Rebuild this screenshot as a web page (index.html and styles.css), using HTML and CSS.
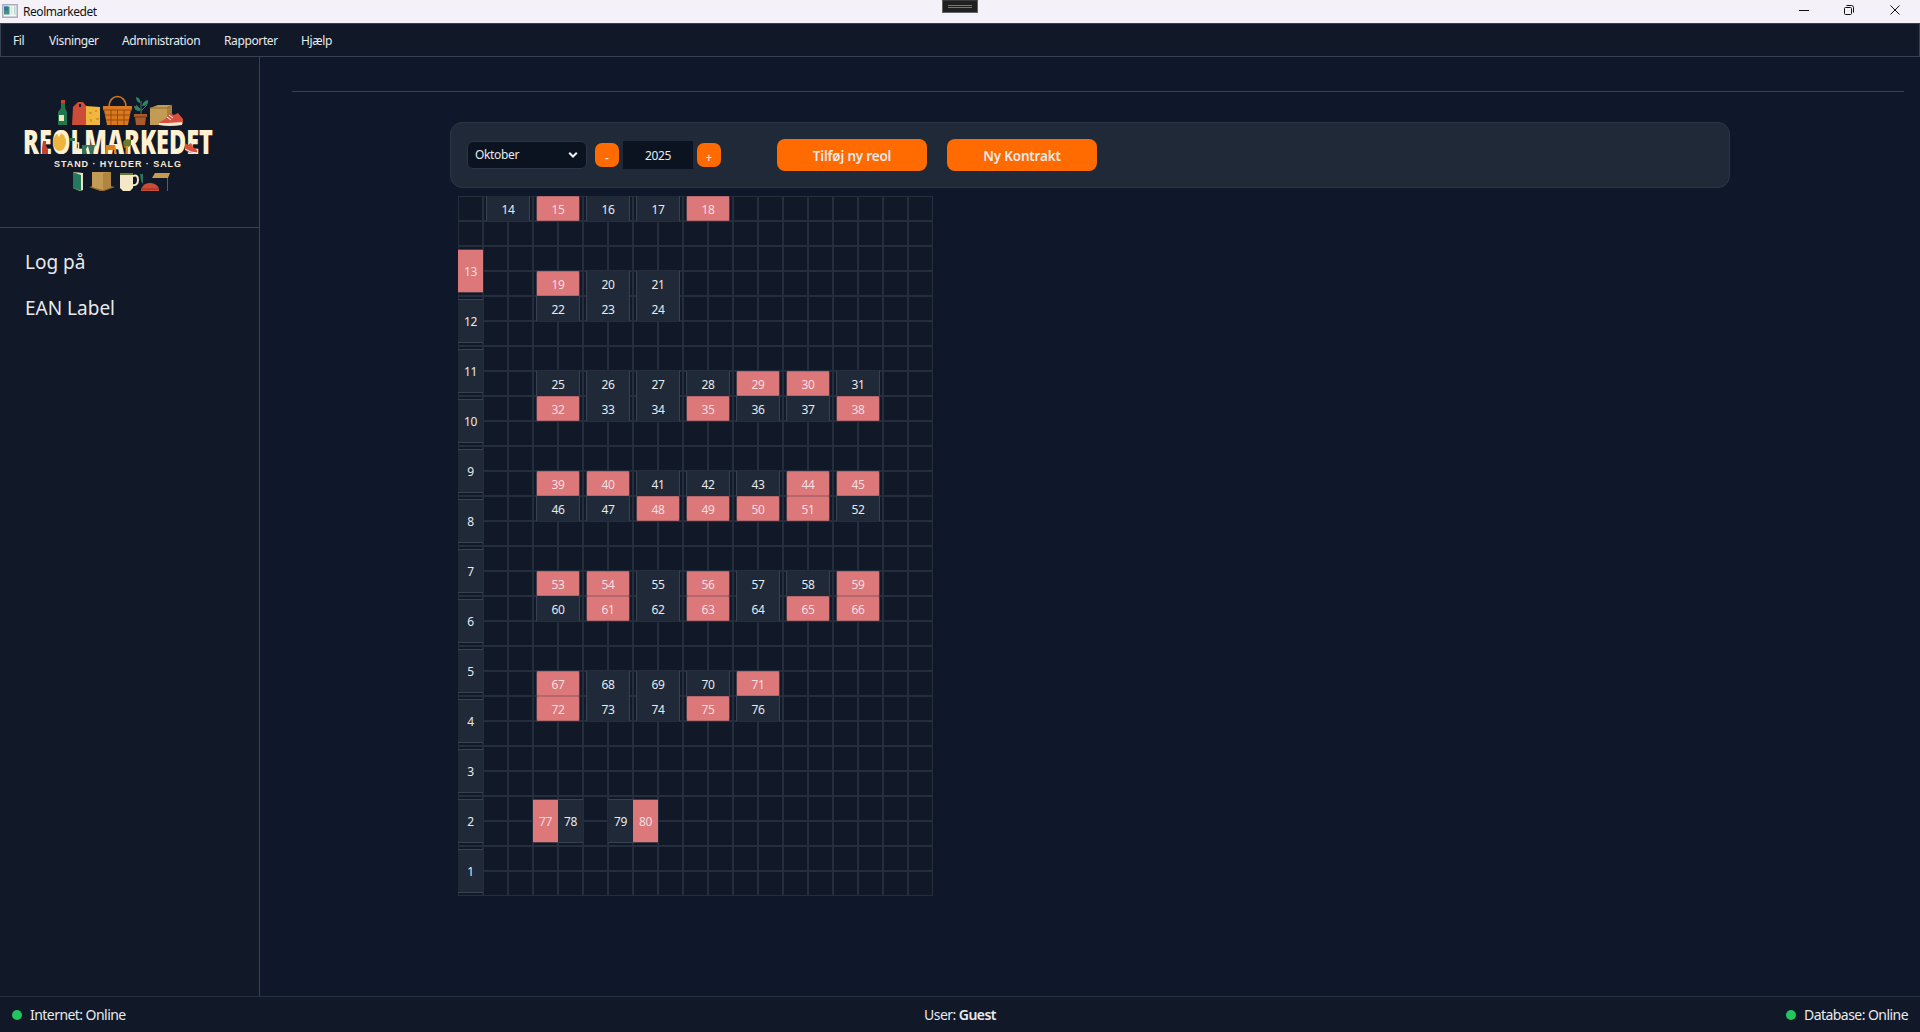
FILE: index.html
```html
<!DOCTYPE html>
<html lang="da">
<head>
<meta charset="utf-8">
<title>Reolmarkedet</title>
<link rel="stylesheet" href="styles.css">
</head>
<body>
<header class="titlebar">
  <svg class="app-icon" width="16" height="14" viewBox="0 0 16 14"><rect x=".75" y=".75" width="14.5" height="12.5" fill="#f4f6f8" stroke="#a9afb8" stroke-width="1.5"/><rect x="2" y="2.5" width="5.5" height="8" fill="#3f9580"/><rect x="2" y="2.500" width="4" height="4" fill="#3d70a8"/><rect x="8.500" y="2.500" width="2" height="8" fill="#dde5e9"/><rect x="12" y="2.500" width="1.500" height="8" fill="#b5d8c5"/></svg>
  <span class="app-title">Reolmarkedet</span>
  <span class="grip"><i></i><i></i></span>
  <svg class="win-buttons" width="120" height="23" viewBox="0 0 120 23" fill="none" stroke="#111"><path d="M9 10.500h10"/><rect x="54.500" y="7.500" width="7" height="7" rx="1"/><path d="M56.500 5.500h5q2 0 2 2v5"/><path d="M100.500 5.500l9 9m0-9l-9 9"/></svg>
</header>
<nav class="menubar"><span class="m1">Fil</span><span class="m2">Visninger</span><span class="m3">Administration</span><span class="m4">Rapporter</span><span class="m5">Hjælp</span></nav>
<div class="body">
  <aside class="sidebar">
    <div class="logo">
      <svg width="220" height="120" viewBox="0 0 220 120">
        <path d="M51 15h4v8l2 4v13h-9V27l3-4z" fill="#21764a"/><path d="M51 15h4v3h-4z" fill="#c9432f"/><path d="M49 30h5v6h-5z" fill="#f3e6c2"/>
        <path d="M63 22l5-5h5l4 5v18H62z" fill="#cc4c37"/><path d="M69 19h2v3h-2z" fill="#111827"/>
        <path d="M76 21l14 1v18H76z" fill="#efb73f"/><path d="M79 27h3v2h-3zM85 25h2v2h-2zM80 34h2v3h-2zM86 33h3v2h-3z" fill="#dc9528"/>
        <path d="M99 22c0-14 17-14 17 0" fill="none" stroke="#cf761f" stroke-width="1.500"/><path d="M93 21h29v4h-1l-3 15H97l-3-15h-1z" fill="#d97a20"/><path d="M93 25h29M95 30h25M96 35h23M101 25v15M107.500 25v15M114 25v15" stroke="#99490f" fill="none"/>
        <path d="M131 29V16m0 10l6-6m-6 5l-5-5" stroke="#2f8561" fill="none"/><path d="M126 12q5 1 4 6-4-1-4-6zM138 15q1 6-6 6 1-5 6-6zM124 21q6 0 6 5-6 0-6-5z" fill="#2f8561"/>
        <path d="M124 29h13v3h-1l-1 8h-9l-1-8h-1z" fill="#a75a2b"/><path d="M125 32h11" stroke="#713515"/>
        <path d="M140 23l8-3h14v17l-4 3h-18z" fill="#c29b55"/><path d="M157 22l5-2v17l-5 3z" fill="#a87e3e"/><path d="M140 23h17l5-3" fill="none" stroke="#8e6a33"/>
        <path d="M149 37q6-1 11-9l4 2 4-2 5 6v5l-10 1h-11z" fill="#d6503d"/><path d="M149 38h9l14-1v3q-13 2-23 0z" fill="#f7e6cb"/><path d="M157 32l4 3m-2-5l4 3" stroke="#fff" fill="none"/>
        <text class="logo-name" x="13" y="69" textLength="190" lengthAdjust="spacingAndGlyphs">REOLMARKEDET</text>
        <path d="M33 56h3v5l2 3v5h-6v-6z" fill="#c9412e"/><ellipse cx="49.500" cy="57" rx="6.500" ry="9" fill="#efb43c"/><path d="M46 47l3 5 3-5" fill="#fff1d2"/><path d="M59 53h6v3h-6z" fill="#2f7354"/><path d="M64 58h4.500v6h-4" stroke="#efe4c4" stroke-width="1.500" fill="none"/><path d="M72 60h13l-2 9H72z" fill="#347356"/><path d="M76 64l2-3 2 8h-3z" fill="#fff1d2"/><path d="M96 60h9l2 9h-3v-4h-6v4h-3z" fill="#dd801f"/><path d="M113 57q2-4 8-2v5l-4 3h-3z" fill="#687c2b"/><path d="M117 61v8" stroke="#e18a23" stroke-width="2"/><path d="M175 58l3 2 3-2 2 4 4 3v3q-7 1-12-3z" fill="#d6503d"/><path d="M175 64q6 4 12 4" stroke="#fff" fill="none"/>
        <text class="logo-sub" x="44" y="81.500" textLength="127">STAND · HYLDER · SALG</text>
        <g transform="translate(-10 0)">
        <path d="M73 87l10 1v17l-3 1-7-3z" fill="#ede2bd"/><path d="M73 87l8 3v16l-8-3z" fill="#24795c"/>
        <path d="M89 102l13-3 13 3-11 4h-4z" fill="#986d31"/><path d="M92 87h19v15l-8 3-11-3z" fill="#c39b55"/><path d="M103 88l8-1v15l-8 3z" fill="#ae863f"/>
        <path d="M133 91q5-2 5 4t-6 5" fill="none" stroke="#f5e8c7" stroke-width="2"/><path d="M120 88h13v15l-3 3h-7l-3-3z" fill="#f5e8c7"/><path d="M120 88h13v2h-13z" fill="#687b2c"/>
        <path d="M140 89h3v10l-2-3z" fill="#2b7659"/><path d="M141 104q3-7 10-6t8 6v2h-18z" fill="#cc4c34"/><path d="M141 104h18" stroke="#8b3021"/><path d="M155 88h15l-2 5h-16z" fill="#c89b51"/><path d="M167.500 93v13" stroke="#81502d"/>
        </g>
      </svg>
    </div>
    <div class="side-links"><span>Log på</span><span>EAN Label</span></div>
  </aside>
  <main class="content">
    <hr class="rule">
    <section class="toolbar">
      <div class="select"><span>Oktober</span><svg width="10" height="8" viewBox="0 0 10 8"><path d="M1.200 1.700L5 5.500l3.800-3.800" fill="none" stroke="#f0f1f3" stroke-width="2"/></svg></div>
      <span class="step">-</span><span class="year">2025</span><span class="step">+</span>
      <span class="action first">Tilføj ny reol</span><span class="action">Ny Kontrakt</span>
    </section>
    <section class="floor">
      <div class="row" style="grid-area:1/2"><b>14</b><b class="r">15</b><b>16</b><b>17</b><b class="r">18</b></div>
      <div class="row" style="grid-area:4/4"><b class="r">19</b><b>20</b><b>21</b></div>
      <div class="row" style="grid-area:5/4"><b>22</b><b>23</b><b>24</b></div>
      <div class="row" style="grid-area:8/4"><b>25</b><b>26</b><b>27</b><b>28</b><b class="r">29</b><b class="r">30</b><b>31</b></div>
      <div class="row" style="grid-area:9/4"><b class="r">32</b><b>33</b><b>34</b><b class="r">35</b><b>36</b><b>37</b><b class="r">38</b></div>
      <div class="row" style="grid-area:12/4"><b class="r">39</b><b class="r">40</b><b>41</b><b>42</b><b>43</b><b class="r">44</b><b class="r">45</b></div>
      <div class="row" style="grid-area:13/4"><b>46</b><b>47</b><b class="r">48</b><b class="r">49</b><b class="r">50</b><b class="r">51</b><b>52</b></div>
      <div class="row" style="grid-area:16/4"><b class="r">53</b><b class="r">54</b><b>55</b><b class="r">56</b><b>57</b><b>58</b><b class="r">59</b></div>
      <div class="row" style="grid-area:17/4"><b>60</b><b class="r">61</b><b>62</b><b class="r">63</b><b>64</b><b class="r">65</b><b class="r">66</b></div>
      <div class="row" style="grid-area:20/4"><b class="r">67</b><b>68</b><b>69</b><b>70</b><b class="r">71</b></div>
      <div class="row" style="grid-area:21/4"><b class="r">72</b><b>73</b><b>74</b><b class="r">75</b><b>76</b></div>
      <div class="col" style="grid-area:3/1"><b class="r">13</b><b>12</b><b>11</b><b>10</b><b>9</b><b>8</b><b>7</b><b>6</b><b>5</b><b>4</b><b>3</b><b>2</b><b>1</b></div>
      <div class="col" style="grid-area:25/4"><b class="r">77</b></div>
      <div class="col" style="grid-area:25/5"><b>78</b></div>
      <div class="col" style="grid-area:25/7"><b>79</b></div>
      <div class="col" style="grid-area:25/8"><b class="r">80</b></div>
    </section>
  </main>
</div>
<footer class="status">
  <span class="net"><i class="dot"></i><span class="t1">Internet: Online</span></span>
  <span class="user">User: <strong>Guest</strong></span>
  <span class="db"><i class="dot"></i><span class="t2">Database: Online</span></span>
</footer>
</body>
</html>
```
FILE: styles.css
```css
* { box-sizing: border-box; }
body {
  margin: 0; width: 1920px; height: 1032px; overflow: hidden;
  display: flex; flex-direction: column;
  background: #0f172a; color: #e8eaed;
  font: 12px/16px "Noto Sans", "Open Sans", sans-serif;
}
.titlebar {
  height: 23px; flex: none; background: #f4f1f8; color: #111;
  display: grid; grid-template-columns: 23px 919px 1fr 120px;
}
.app-icon { margin: 4px 0 0 2px; }
.app-title { line-height: 24px; letter-spacing: -.5px; }
.app-title { letter-spacing: -.45px; }
.grip {
  width: 36px; height: 13px; background: #202020; border: 1px solid #626262; border-top-color: #3a3a3a;
  display: flex; flex-direction: column; align-items: center; gap: 1px; padding-top: 4px;
}
.grip i { width: 24px; height: 1px; background: #777; }
.win-buttons { margin-left: -10px; }

.menubar {
  height: 34px; flex: none; display: flex; padding-left: 12px;
  background: #111827; border: 1px solid #374151; line-height: 34px; letter-spacing: -.38px;
}
.m1 { width: 36px; } .m2 { width: 73px; } .m3 { width: 102px; } .m4 { width: 77px; }

.body { flex: 1; display: flex; min-height: 0; }
.sidebar { width: 260px; background: #111827; border-right: 1px solid #374151; }
.logo { height: 171px; padding: 28px 0 0 10px; border-bottom: 1px solid #374151; }
.logo-name { font: 800 33px "Open Sans", sans-serif; fill: #fff1d2; }
.logo-sub { font: 700 9px "Liberation Sans", sans-serif; fill: #f7ead0; }
.side-links { display: flex; flex-direction: column; gap: 22px; padding: 22px 0 0 25px; font-size: 19px; line-height: 24px; letter-spacing: 0; }

.content { flex: 1; padding: 34px 16px 0 32px; }
.rule { height: 1px; margin: 0; border: 0; background: #374151; }
.toolbar {
  width: 1280px; height: 66px; margin: 30px 0 0 158px; padding-left: 16px;
  display: flex; align-items: center;
  background: #1f2937; border: 1px solid #2b3544; border-radius: 12px;
}
.select {
  width: 120px; height: 28px; margin-right: 8px; padding: 0 8px 0 7px; border: 1px solid #2c3545; border-radius: 6px;
  background: #0b1220; display: flex; align-items: center; justify-content: space-between; letter-spacing: -.35px; line-height: 28px;
}
.step {
  width: 24px; height: 24px; border-radius: 7px; background: #ff6b00;
  text-align: center; line-height: 29px; font-weight: 500;
}
.year { width: 70px; height: 28px; margin: 0 4px; background: #0b1220; text-align: center; line-height: 29px; letter-spacing: -.4px; }
.action {
  width: 150px; height: 32px; margin-left: 20px; border-radius: 8px; background: #ff6b00;
  text-align: center; font-size: 13.5px; font-weight: 600; line-height: 34px; letter-spacing: -.2px;
}
.action.first { margin-left: 56px; }

.floor {
  width: 475px; height: 700px; margin: 8px 0 0 166px;
  display: grid; grid-template: repeat(28, 25px) / repeat(19, 25px);
  background-color: #111827;
  background-image:
    linear-gradient(90deg, #252e3c 1px, transparent 1px 24px, #252e3c 24px),
    linear-gradient(#252e3c 1px, transparent 1px 24px, #252e3c 24px);
  background-size: 25px 25px;
}
.row, .col { display: flex; width: max-content; height: max-content; letter-spacing: -.4px; }
.col { flex-direction: column; }
b { font-weight: 400; text-align: center; background: #1f2937; border: 0 solid #374151; }
.row b { width: 44px; height: 25px; margin: 0 3px; border-width: 0 1px; line-height: 27px; }
.col b { width: 25px; height: 44px; margin: 3px 0; border-width: 1px 0; line-height: 43px; }
.row .r, .col .r { background: #dc7879; border-color: #4c3c47; color: #f1dfe2; }
.row .r { border-width: 1px; border-top-color: #b5676b; border-bottom-color: #b5676b; line-height: 25px; border-radius: 2px; }

.status {
  height: 36px; flex: none; display: grid; grid-template-columns: 1fr auto 1fr; align-items: center;
  padding: 0 12px; background: #111827; border-top: 1px solid #263142;
  font-size: 14px; letter-spacing: -.55px;
}
.net, .db { display: flex; align-items: center; gap: 8px; }
.db { justify-content: flex-end; }
.dot { width: 10px; height: 10px; border-radius: 50%; background: #22c55e; }
strong { font-weight: 600; }
```
